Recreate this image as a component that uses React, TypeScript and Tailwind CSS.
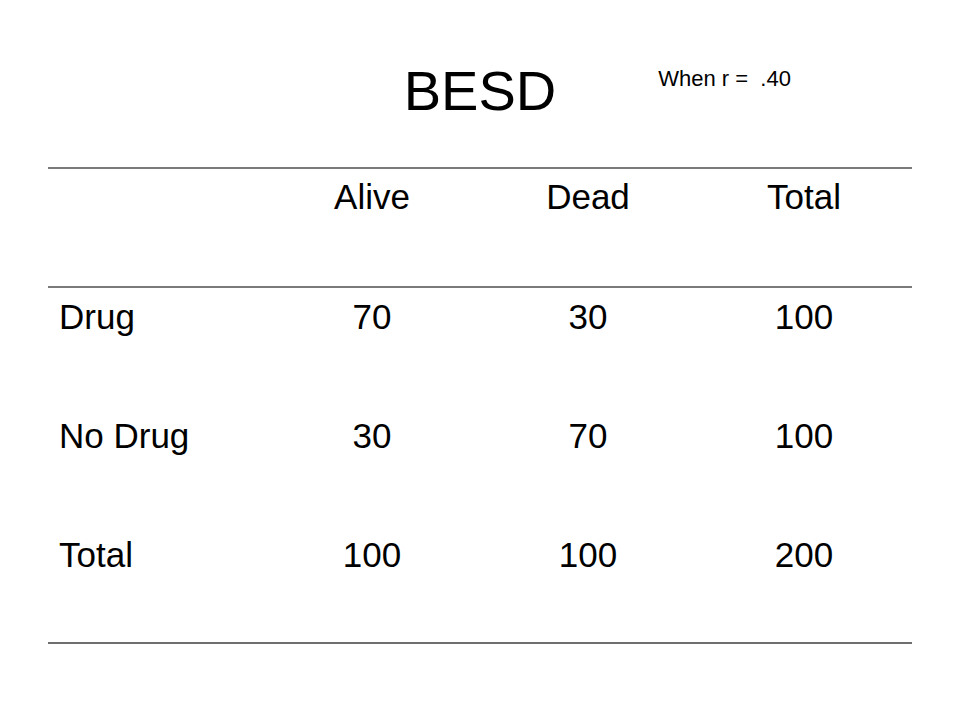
import React from 'react';

const rows = [
  { label: 'Drug', alive: '70', dead: '30', total: '100' },
  { label: 'No Drug', alive: '30', dead: '70', total: '100' },
  { label: 'Total', alive: '100', dead: '100', total: '200' },
];

const App = () => {
  return (
    <div
      className="w-[960px] h-[720px] bg-white text-black overflow-hidden"
      style={{ fontFamily: '"Liberation Sans", Arial, sans-serif' }}
    >
      {/* Title */}
      <div className="h-[167px] pt-[63px] grid grid-cols-[1fr_auto_1fr] items-start">
        <div />
        <h1 className="text-[56px] leading-none font-normal">BESD</h1>
        <div className="pl-[102px] pt-[5px]">
          <span className="text-[22px] leading-none whitespace-pre">When r =  .40</span>
        </div>
      </div>

      {/* Table */}
      <div className="ml-[48px] w-[864px]">
        <div className="grid grid-cols-4 h-[121px] border-y-2 border-[#7a7a7a] pt-[7px] text-[35px] leading-[1.2]">
          <div />
          <div className="text-center">Alive</div>
          <div className="text-center">Dead</div>
          <div className="text-center">Total</div>
        </div>
        {rows.map((r, i) => (
          <div
            key={r.label}
            className={`grid grid-cols-4 pt-[8px] text-[35px] leading-[1.2] ${
              i === rows.length - 1 ? 'h-[118px] border-b-2 border-[#6e6e6e]' : 'h-[119px]'
            }`}
          >
            <div className="pl-[11px]">{r.label}</div>
            <div className="text-center">{r.alive}</div>
            <div className="text-center">{r.dead}</div>
            <div className="text-center">{r.total}</div>
          </div>
        ))}
      </div>
    </div>
  );
};

export default App;
